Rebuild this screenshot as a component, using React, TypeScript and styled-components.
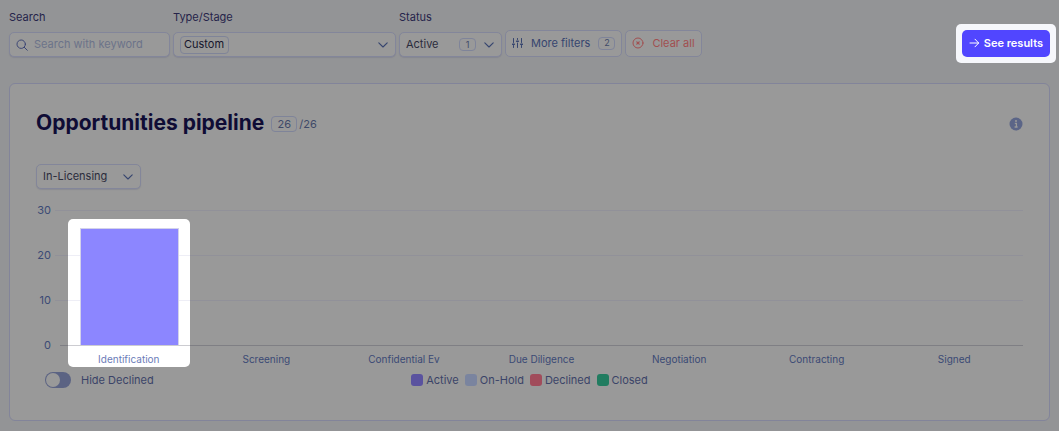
import React from "react";
import styled, { createGlobalStyle } from "styled-components";

const GlobalStyle = createGlobalStyle`
  *, *::before, *::after { box-sizing: border-box; }
  html { background: #939496; }
  body { margin: 0; font: 400 11px/16px Inter, "Liberation Sans", sans-serif; color: #343a5c; }
  button, input, select { font: inherit; color: inherit; margin: 0; }
`;

const Page = styled.div`
  padding: 9px 9px 10px;
`;

const Toolbar = styled.form`
  display: flex;
  align-items: flex-end;
  gap: 3px;
  padding-bottom: 26px;
`;

const Field = styled.div<{ $width: number }>`
  width: ${(p) => p.$width}px;
  display: flex;
  flex-direction: column;
  gap: 7px;
`;

const FieldLabel = styled.label`
  color: #25234a;
`;

const Control = styled.div<{ $width?: number }>`
  display: flex;
  align-items: center;
  gap: 8px;
  height: 25px;
  width: ${(p) => (p.$width ? `${p.$width}px` : "auto")};
  padding: 0 7px 0 6px;
  border: 1px solid #83869a;
  border-radius: 5px;
  background: #999;
  box-shadow: 0 1px 1px rgba(80, 85, 120, 0.2);
  svg { flex: none; }
`;

const SearchControl = styled(Control)`
  gap: 6px;
`;

const SearchInput = styled.input`
  flex: 1;
  min-width: 0;
  padding: 0 0 2px;
  border: 0;
  outline: 0;
  background: transparent;
  &::placeholder { color: #6c7389; opacity: 1; }
`;

const Select = styled.select<{ $chip?: boolean }>`
  appearance: none;
  ${(p) => (p.$chip ? "margin-right: auto; height: 18px; padding: 0 3px; border: 1px solid #7f8498;" : "flex: 1; min-width: 0; padding: 0 0 1px; border: 0;")}
  border-radius: 4px;
  outline: 0;
  line-height: 15px;
  background: transparent;
  color: ${(p) => (p.$chip ? "#16162c" : "#2b2c3c")};
`;

const Count = styled.span<{ $wide?: boolean }>`
  display: inline-flex;
  align-items: center;
  justify-content: center;
  height: ${(p) => (p.$wide ? 16 : 13)}px;
  min-width: ${(p) => (p.$wide ? 26 : 17)}px;
  border: 1px solid #7f8499;
  border-radius: 4px;
  font-size: ${(p) => (p.$wide ? 11 : 9)}px;
  line-height: 12px;
  color: #3f4968;
`;

const Button = styled.button<{ $tone?: "danger" }>`
  display: inline-flex;
  align-items: center;
  gap: 8px;
  height: 27px;
  padding: 0 6px 1px;
  border: 1px solid #83869a;
  border-radius: 5px;
  background: #999;
  color: ${(p) => (p.$tone === "danger" ? "#a14f50" : "#36456f")};
  white-space: nowrap;
`;

const Spotlight = styled.div`
  margin: -6px -6px -6px auto;
  padding: 6px;
  border-radius: 5px;
  background: #f6f7fb;
`;

const Primary = styled.button`
  display: flex;
  align-items: center;
  justify-content: center;
  gap: 4px;
  height: 27px;
  padding: 0 7px 1px;
  border: 0;
  border-radius: 5px;
  background: #5146ff;
  color: #fff;
  font-weight: 600;
  white-space: nowrap;
`;

const Card = styled.section`
  padding: 26px 26px 32px;
  border: 1px solid #82849a;
  border-radius: 6px;
  background: #999;
`;

const CardHeader = styled.header`
  display: flex;
  align-items: center;
  height: 28px;
  margin-bottom: 26px;
  svg { margin-left: auto; }
`;

const Title = styled.h1`
  margin: 0 7px 0 0;
  padding-bottom: 2px;
  font-size: 21px;
  line-height: 24px;
  font-weight: 700;
  color: #0f0c35;
`;

const Total = styled.span`
  margin-left: 2px;
  color: #3f4968;
`;

const Chart = styled.div`
  display: flex;
  gap: 4px;
  margin-top: 13px;
`;

const Axis = styled.div`
  display: flex;
  flex-direction: column;
  justify-content: space-between;
  width: 15px;
  height: 151px;
  text-align: right;
  color: #3b4a75;
`;

const Plot = styled.div`
  position: relative;
  flex: 1;
  display: flex;
  padding: 8px 0 0 5px;
`;

const GridLines = styled.div`
  position: absolute;
  inset: 8px 0 auto;
  height: 136px;
  display: flex;
  flex-direction: column;
  justify-content: space-between;
`;

const Line = styled.span<{ $base?: boolean }>`
  height: 1px;
  margin-left: ${(p) => (p.$base ? 5 : 0)}px;
  background: ${(p) => (p.$base ? "rgba(50, 50, 70, 0.25)" : "rgba(70, 70, 150, 0.09)")};
`;

const Column = styled.div`
  position: relative;
  flex: 1;
  min-width: 0;
`;

const Highlight = styled.div`
  position: absolute;
  inset: 9px 8px 0;
  border-radius: 5px;
  background: #fff;
`;

const BarArea = styled.div`
  position: relative;
  z-index: 1;
  display: flex;
  align-items: flex-end;
  height: 135px;
  padding: 0 19px 0 20px;
`;

const Bar = styled.div`
  flex: 1;
  border: 1px solid #d3d2ea;
  border-bottom: 0;
  background: #8c86ff;
`;

const Category = styled.div<{ $lit?: boolean }>`
  position: relative;
  padding: 6px 0 0;
  font-size: 10px;
  line-height: 16px;
  text-align: center;
  color: ${(p) => (p.$lit ? "#6b7cb8" : "#3b4a75")};
`;

const Footer = styled.footer`
  display: grid;
  grid-template-columns: 1fr auto 1fr;
  align-items: center;
  margin-top: 5px;
  padding-left: 9px;
`;

const Toggle = styled.label`
  display: flex;
  align-items: center;
  gap: 10px;
  color: #3b4468;
`;

const Switch = styled.input`
  appearance: none;
  width: 26px;
  height: 16px;
  border-radius: 8px;
  background: #5b6383;
  &::before {
    content: "";
    display: block;
    width: 14px;
    height: 14px;
    margin: 1px;
    border-radius: 50%;
    background: #999;
  }
`;

const Legend = styled.ul`
  display: flex;
  gap: 6px;
  margin: 0;
  padding: 0 9px 0 0;
  list-style: none;
  color: #3b4468;
`;

const LegendItem = styled.li<{ $color: string }>`
  display: flex;
  align-items: center;
  gap: 3px;
  &::before {
    content: "";
    width: 12px;
    height: 12px;
    border-radius: 3px;
    background: ${(p) => p.$color};
  }
`;

const Chevron = () => (
  <svg width="10" height="6" viewBox="0 0 10 6" fill="none" stroke="#36456f" strokeWidth="1.1" strokeLinecap="round" strokeLinejoin="round">
    <path d="M.8.8 5 5 9.2.8" />
  </svg>
);

const MAX = 30;
const stages = [
  { name: "Identification", value: 26 },
  { name: "Screening", value: 0 },
  { name: "Confidential Ev", value: 0 },
  { name: "Due Diligence", value: 0 },
  { name: "Negotiation", value: 0 },
  { name: "Contracting", value: 0 },
  { name: "Signed", value: 0 },
];

export default function App() {
  return (
    <Page>
      <GlobalStyle />
      <Toolbar onSubmit={(e) => e.preventDefault()}>
        <Field $width={161}>
          <FieldLabel htmlFor="search">Search</FieldLabel>
          <SearchControl>
            <svg width="12" height="12" viewBox="0 0 12 12" fill="none" stroke="#3c4675" strokeLinecap="round">
              <circle cx="5.2" cy="5.2" r="4.2" />
              <path d="m8.3 8.3 3 3" />
            </svg>
            <SearchInput id="search" placeholder="Search with keyword" />
          </SearchControl>
        </Field>
        <Field $width={223}>
          <FieldLabel htmlFor="type">Type/Stage</FieldLabel>
          <Control>
            <Select id="type" $chip><option>Custom</option></Select>
            <Chevron />
          </Control>
        </Field>
        <Field $width={103}>
          <FieldLabel htmlFor="status">Status</FieldLabel>
          <Control>
            <Select id="status"><option>Active</option></Select>
            <Count>1</Count>
            <Chevron />
          </Control>
        </Field>
        <Button type="button">
          <svg width="11" height="12" viewBox="0 0 11 12" fill="none" stroke="#36456f" strokeLinecap="round">
            <path d="M1.5 1.5v4M1.5 8.5v2M5.5 1.5v1M5.5 6v4.5M9.5 1.5v4M9.5 8.5v2" />
            <path d="M.7 7.2h1.6M4.7 4.2h1.6M8.7 7.2h1.6" strokeWidth="1.6" />
          </svg>
          More filters
          <Count>2</Count>
        </Button>
        <Button type="button" $tone="danger">
          <svg width="12" height="12" viewBox="0 0 12 12" fill="none" stroke="#a14f50" strokeLinecap="round">
            <circle cx="6" cy="6" r="5" />
            <path d="m4.8 4.8 2.4 2.4M7.2 4.8 4.8 7.2" strokeWidth="1.2" />
          </svg>
          Clear all
        </Button>
        <Spotlight>
          <Primary type="submit">
            <svg width="11" height="10" viewBox="0 0 11 10" fill="none" stroke="#fff" strokeLinecap="round" strokeLinejoin="round">
              <path d="M1 5h8.5M6 1.2 9.7 5 6 8.8" />
            </svg>
            See results
          </Primary>
        </Spotlight>
      </Toolbar>

      <Card>
        <CardHeader>
          <Title>Opportunities pipeline</Title>
          <Count $wide>26</Count>
          <Total>/26</Total>
          <svg width="14" height="14" viewBox="0 0 14 14">
            <circle cx="7" cy="7" r="6.5" fill="#5b6587" />
            <path d="M5.8 6.4h1.6v3.4M5.6 10h3" stroke="#999" strokeWidth="1.3" fill="none" />
            <circle cx="7" cy="4.1" r="1" fill="#999" />
          </svg>
        </CardHeader>

        <Control $width={105}>
          <Select aria-label="Licensing type"><option>In-Licensing</option></Select>
          <Chevron />
        </Control>

        <Chart>
          <Axis>
            {[30, 20, 10, 0].map((n) => <span key={n}>{n}</span>)}
          </Axis>
          <Plot>
            {stages.map((s) => (
              <Column key={s.name}>
                {s.value > 0 && <Highlight />}
                <BarArea>
                  {s.value > 0 && <Bar style={{ height: `${(s.value / MAX) * 100}%` }} />}
                </BarArea>
                <Category $lit={s.value > 0}>{s.name}</Category>
              </Column>
            ))}
            <GridLines>
              <Line /><Line /><Line /><Line $base />
            </GridLines>
          </Plot>
        </Chart>

        <Footer>
          <Toggle><Switch type="checkbox" role="switch" />Hide Declined</Toggle>
          <Legend>
            <LegendItem $color="#5a529f">Active</LegendItem>
            <LegendItem $color="#7a849f">On-Hold</LegendItem>
            <LegendItem $color="#a14c5b">Declined</LegendItem>
            <LegendItem $color="#217c60">Closed</LegendItem>
          </Legend>
        </Footer>
      </Card>
    </Page>
  );
}
